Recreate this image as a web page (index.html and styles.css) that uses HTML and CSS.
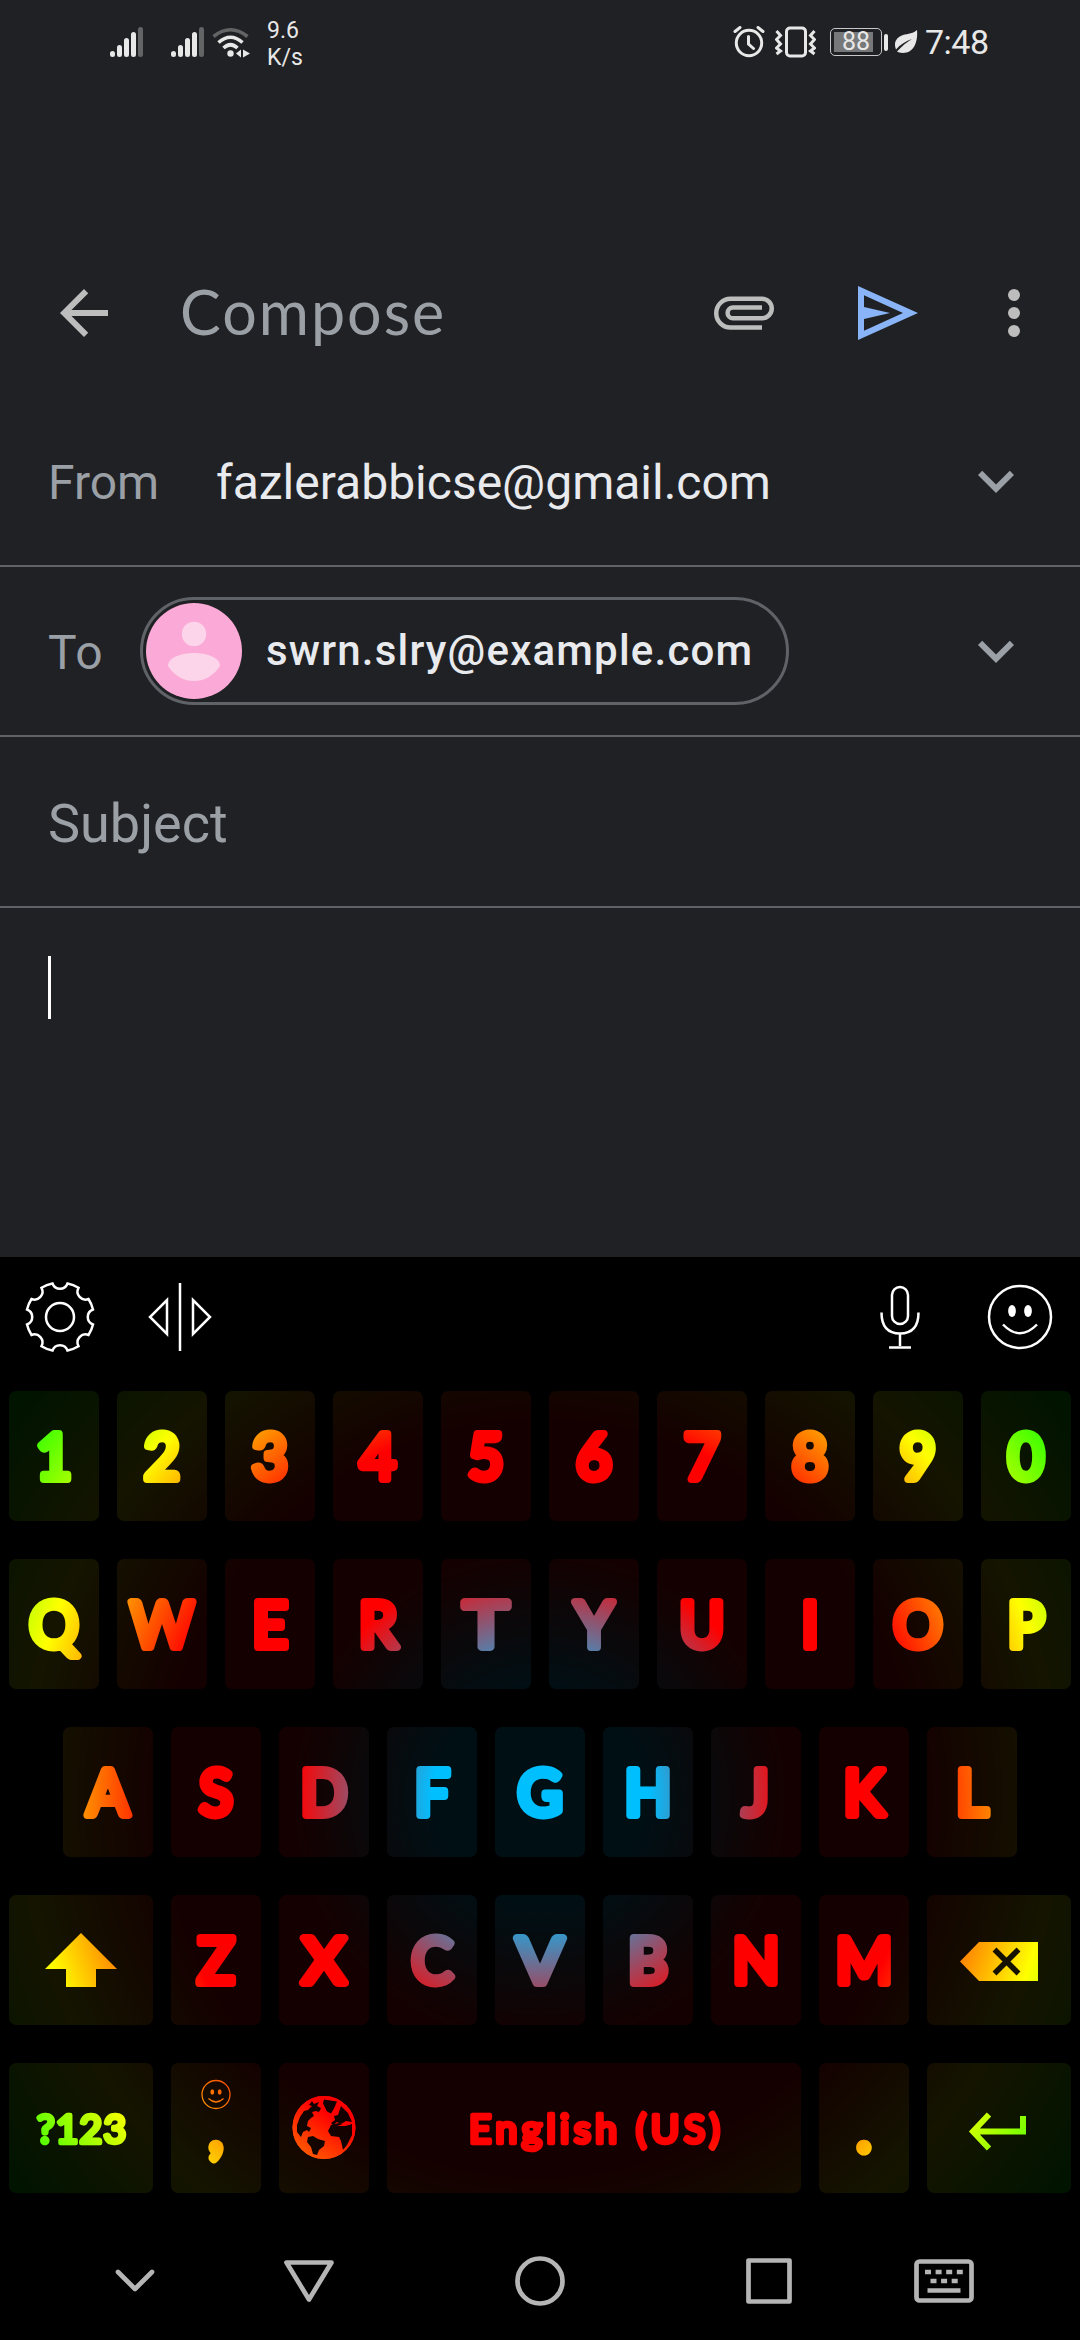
FILE: index.html
```html
<!DOCTYPE html>
<html lang="en">
<head>
<meta charset="utf-8">
<title>Compose</title>
<link rel="stylesheet" href="styles.css">
</head>
<body>
<div class="phone">
  <header class="status">
    <svg class="signal" width="33" height="30" viewBox="0 0 33 30"><path d="M2.5 26.5v1M9.5 20.5v7M16.500 13.500v14M23.500 7.500v20"/><path class="dim" d="M30.500 2.500v25"/></svg>
    <svg class="signal second" width="33" height="30" viewBox="0 0 33 30"><path d="M2.500 26.500v1M9.500 20.500v7M16.500 13.500v14M23.500 7.500v20"/><path class="dim" d="M30.500 2.500v25"/></svg>
    <svg class="wifi" width="38" height="31" viewBox="0 0 38 31" fill="none" stroke="#e8e8e8" stroke-width="3.600"><path stroke="#636466" d="M1.500 9.500Q18.500-4 35.500 9.500"/><path d="M6.500 15.500Q18.500 5 30.500 15.500M11.500 21Q18.500 14.500 25.500 21"/><circle cx="18.500" cy="26.500" r="3.200" fill="#e8e8e8" stroke="none"/><path fill="#e8e8e8" stroke="none" d="M24 26.500l5-4v8zM31 22.500l7 4-7 4z"/></svg>
    <div class="rate"><span>9.6</span><span>K/s</span></div>
    <div class="status-right">
      <svg width="32" height="32" viewBox="0 0 32 32" fill="none" stroke="#e8e8e8" stroke-width="3"><circle cx="16" cy="17" r="12.700"/><path stroke-linecap="round" d="M2 5.500L7 1.500M30 5.500L25 1.500M15.500 10.500v7.500l5 4.500"/></svg>
      <svg class="vibrate" width="41" height="32" viewBox="0 0 41 32" fill="none" stroke="#e8e8e8" stroke-width="3"><rect x="11.500" y="2" width="19" height="28" rx="3.500"/><path d="M1.500 5l4 4.500-4 4 4 4.500-4 4 4 3-4 3M39.500 5l-4 4.500 4 4-4 4.500 4 4-4 3 4 3"/></svg>
      <div class="battery"><span class="battery-level">88</span></div>
      <svg class="leaf" width="24" height="26" viewBox="0 0 24 26" fill="#e8e8e8"><path d="M23 1C24 11 21 24 9 24C6 24 4 23 3 22.500C8 17 13 13 18 10C12 12 6 15.500 2 20.500C-1 13 3 8 9 6C14 5 20 4 23 1zM2.500 22l-1 3"/></svg>
      <time class="clock">7:48</time>
    </div>
  </header>

  <main class="compose">
    <div class="appbar">
      <svg class="back" width="72" height="72" viewBox="0 0 24 24"><path fill="#bdbdbd" d="M20 11H7.830l5.590-5.590L12 4l-8 8 8 8 1.410-1.410L7.830 13H20v-2z"/></svg>
      <h1 class="title">Compose</h1>
      <svg class="attach" width="60" height="34" viewBox="714 297.500 60 34" fill="none" stroke="#bdbdbd" stroke-width="4.500"><path d="M762 329H730.500A14.250 14.350 0 0 1 730.500 300.300H762A9.750 9.750 0 0 1 762 319.800H733A5.400 5.400 0 0 1 733 309H762"/></svg>
      <svg class="send" width="60" height="54" viewBox="0 0 60 54"><path fill="#8ab4f8" fill-rule="evenodd" d="M0 0L60 27L0 54zM6 9.300V21L32 27L6 33V44.700L45 27z"/></svg>
      <svg class="more" width="12" height="48" viewBox="0 0 12 48" fill="#bdbdbd"><circle cx="6" cy="6" r="6"/><circle cx="6" cy="24" r="6"/><circle cx="6" cy="42" r="6"/></svg>
    </div>
    <div class="row">
      <span class="label from">From</span>
      <span class="address">fazlerabbicse@gmail.com</span>
      <svg class="expand" width="72" height="72" viewBox="0 0 24 24"><path fill="#9aa0a6" d="M16.590 8.590L12 13.170 7.410 8.590 6 10l6 6 6-6z"/></svg>
    </div>
    <div class="row">
      <span class="label to">To</span>
      <span class="chip">
        <svg width="96" height="96" viewBox="0 0 96 96"><circle cx="48" cy="48" r="48" fill="#fba9d6"/><circle cx="48" cy="31" r="12.200" fill="#fdd5ea"/><path fill="#fdd5ea" d="M22 63C22 54 36 50 48 50S74 54 74 63C68 72 59 78 48 78S28 72 22 63z"/></svg>
        <span class="chip-text">swrn.slry@example.com</span>
      </span>
      <svg class="expand" width="72" height="72" viewBox="0 0 24 24"><path fill="#9aa0a6" d="M16.590 8.590L12 13.170 7.410 8.590 6 10l6 6 6-6z"/></svg>
    </div>
    <div class="row subject"><span>Subject</span></div>
    <div class="editor"><div class="caret"></div></div>
  </main>

  <section class="keyboard">
    <div class="tools">
      <svg width="72" height="72" viewBox="-36 -36 72 72"><path d="M-7.500-33.500A8 8 0 0 0 7.500-33.500A34 34 0 0 1 18.500-29.200A8 8 0 0 0 28.500-18A34 34 0 0 1 33-7.500A8 8 0 0 0 33 7.500A34 34 0 0 1 28.500 18A8 8 0 0 0 18.500 29.200A34 34 0 0 1 7.500 33.500A8 8 0 0 0-7.500 33.500A34 34 0 0 1-18.500 29.200A8 8 0 0 0-28.500 18A34 34 0 0 1-33 7.500A8 8 0 0 0-33-7.500A34 34 0 0 1-28.500-18A8 8 0 0 0-18.500-29.200A34 34 0 0 1-7.500-33.500z"/><circle r="14"/></svg>
      <svg width="66" height="72" viewBox="-33 -36 66 72"><path d="M0-34V34M-13-17V17L-30 0zM13-17V17L30 0z"/></svg>
      <svg class="mic" width="42" height="66" viewBox="-21 -33 42 66"><rect x="-8" y="-30" width="16" height="37" rx="8"/><path d="M-18.500-4.500Q-18.500 16.500 0 16.500T18.500-4.500M0 16.500V29M-11 30.500H11"/></svg>
      <svg width="66" height="66" viewBox="-33 -33 66 66"><circle r="31"/><ellipse cx="-8" cy="-6" rx="3.900" ry="6" fill="#fff" stroke="none"/><ellipse cx="8" cy="-6" rx="3.900" ry="6" fill="#fff" stroke="none"/><path d="M-17 7.500Q0 25 17 7.500"/></svg>
    </div>

    <div class="keys">
      <div class="keyrow">
        <svg class="key" viewBox="0 0 90 130"><text x="45" y="87.500">1</text></svg>
        <svg class="key" viewBox="0 0 90 130"><text x="45" y="87.500">2</text></svg>
        <svg class="key" viewBox="0 0 90 130"><text x="45" y="87.500">3</text></svg>
        <svg class="key" viewBox="0 0 90 130"><text x="45" y="87.500">4</text></svg>
        <svg class="key" viewBox="0 0 90 130"><text x="45" y="87.500">5</text></svg>
        <svg class="key" viewBox="0 0 90 130"><text x="45" y="87.500">6</text></svg>
        <svg class="key" viewBox="0 0 90 130"><text x="45" y="87.500">7</text></svg>
        <svg class="key" viewBox="0 0 90 130"><text x="45" y="87.500">8</text></svg>
        <svg class="key" viewBox="0 0 90 130"><text x="45" y="87.500">9</text></svg>
        <svg class="key" viewBox="0 0 90 130"><text x="45" y="87.500">0</text></svg>
      </div>
      <div class="keyrow">
        <svg class="key" viewBox="0 0 90 130"><text x="45" y="87.500">Q</text></svg>
        <svg class="key" viewBox="0 0 90 130"><text x="45" y="87.500" textLength="63" lengthAdjust="spacingAndGlyphs">W</text></svg>
        <svg class="key" viewBox="0 0 90 130"><text x="45" y="87.500">E</text></svg>
        <svg class="key" viewBox="0 0 90 130"><text x="45" y="87.500">R</text></svg>
        <svg class="key" viewBox="0 0 90 130"><text x="45" y="87.500" textLength="44" lengthAdjust="spacingAndGlyphs">T</text></svg>
        <svg class="key" viewBox="0 0 90 130"><text x="45" y="87.500">Y</text></svg>
        <svg class="key" viewBox="0 0 90 130"><text x="45" y="87.500">U</text></svg>
        <svg class="key" viewBox="0 0 90 130"><text x="45" y="87.500">I</text></svg>
        <svg class="key" viewBox="0 0 90 130"><text x="45" y="87.500">O</text></svg>
        <svg class="key" viewBox="0 0 90 130"><text x="45" y="87.500">P</text></svg>
      </div>
      <div class="keyrow inset">
        <svg class="key" viewBox="0 0 90 130"><text x="45" y="87.500">A</text></svg>
        <svg class="key" viewBox="0 0 90 130"><text x="45" y="87.500">S</text></svg>
        <svg class="key" viewBox="0 0 90 130"><text x="45" y="87.500">D</text></svg>
        <svg class="key" viewBox="0 0 90 130"><text x="45" y="87.500">F</text></svg>
        <svg class="key" viewBox="0 0 90 130"><text x="45" y="87.500">G</text></svg>
        <svg class="key" viewBox="0 0 90 130"><text x="45" y="87.500">H</text></svg>
        <svg class="key" viewBox="0 0 90 130"><text x="45" y="87.500">J</text></svg>
        <svg class="key" viewBox="0 0 90 130"><text x="45" y="87.500">K</text></svg>
        <svg class="key" viewBox="0 0 90 130"><text x="45" y="87.500">L</text></svg>
      </div>
      <div class="keyrow">
        <svg class="key wide" viewBox="0 0 144 130"><path fill="#fff" d="M72 38L108 74H87V92H57V74H36z"/></svg>
        <svg class="key" viewBox="0 0 90 130"><text x="45" y="87.500">Z</text></svg>
        <svg class="key" viewBox="0 0 90 130"><text x="45" y="87.500" textLength="43" lengthAdjust="spacingAndGlyphs">X</text></svg>
        <svg class="key" viewBox="0 0 90 130"><text x="45" y="87.500">C</text></svg>
        <svg class="key" viewBox="0 0 90 130"><text x="45" y="87.500" textLength="46" lengthAdjust="spacingAndGlyphs">V</text></svg>
        <svg class="key" viewBox="0 0 90 130"><text x="45" y="87.500">B</text></svg>
        <svg class="key" viewBox="0 0 90 130"><text x="45" y="87.500">N</text></svg>
        <svg class="key" viewBox="0 0 90 130"><text x="45" y="87.500">M</text></svg>
        <svg class="key wide" viewBox="0 0 144 130"><path fill="#fff" d="M33 66.500L52 47H111V86H52z"/><path fill="none" stroke="#141414" stroke-width="5.500" d="M67.500 54.500L91.500 78.500M91.500 54.500L67.500 78.500"/></svg>
      </div>
      <div class="keyrow">
        <svg class="key wide" viewBox="0 0 144 130"><text class="word" x="72.500" y="79.500" textLength="89" lengthAdjust="spacing">?123</text></svg>
        <svg class="key" viewBox="0 0 90 130"><g fill="none" stroke="#fff" stroke-width="1.300"><circle cx="45" cy="31.500" r="14"/><path d="M37.500 35.500Q45 42.500 52.500 35.500"/></g><g fill="#fff"><ellipse cx="41.300" cy="29" rx="1.900" ry="2.700"/><ellipse cx="48.700" cy="29" rx="1.900" ry="2.700"/></g><text x="45" y="87.500">,</text></svg>
        <svg class="key" viewBox="0 0 90 130"><circle cx="45" cy="64.500" r="31.500" fill="#fff"/><g fill="#141414"><path d="M33 38l-3 4 3 1-4 4-4 1-4 6-3 8v7l4 5 2-5 4-2 2 2 2-4-4-2 1-5 3-3 3-2-2-4 4-1 3 1 2-4-4-2 2-4-5 2zM45 36.500l13 2-3 7-3 5-4-2-4-8zM62 43l7 7 4 9-6-1-5 3-4-2-4 3-2-2 4-3-1-4 4-1zM73 61v11l-5 10-4 5-2-9-2-4-8-1-3-5 3-6 8-2 5 3 5-1zM29 74l5-1 5 3 7 2-1 5-5 4-2 5-4-1-2-7-4-5z"/></g><circle cx="45" cy="64.500" r="30.500" fill="none" stroke="#fff" stroke-width="2"/><path fill="#fff" d="M58 63l6-2 5 1-5 1zM34 57l4 1-3 1z"/></svg>
        <svg class="key space" viewBox="0 0 414 130"><text class="word" x="207.500" y="79.500" textLength="251" lengthAdjust="spacing">English (US)</text></svg>
        <svg class="key" viewBox="0 0 90 130"><text x="45" y="87.500">.</text></svg>
        <svg class="key wide" viewBox="0 0 144 130"><path fill="none" stroke="#fff" stroke-width="6" d="M62 51.500L46 68.500L62 85.500M46 68.500H96V53"/></svg>
      </div>
    </div>

    <nav class="nav">
      <svg width="44" height="54" viewBox="-22 -27 44 54"><path stroke-linecap="round" d="M-17-9L0 8L17-9"/></svg>
      <svg width="60" height="54" viewBox="-30 -27 60 54"><path d="M-22.500-18.500H22.500L0 18.500z"/></svg>
      <svg width="54" height="54" viewBox="-27 -27 54 54"><circle r="22.500"/></svg>
      <svg width="54" height="54" viewBox="-27 -27 54 54"><rect x="-20.500" y="-20.500" width="41" height="41"/></svg>
      <svg width="64" height="54" viewBox="-32 -27 64 54"><rect x="-27.500" y="-19.500" width="55" height="39" rx="3"/><path stroke-dasharray="6 4.600" d="M-19-9H19"/><path stroke-dasharray="6 4.600" d="M-13.500 0H14.500"/><path d="M-16.500 9.500H16.500"/></svg>
    </nav>
  </section>
</div>
</body>
</html>
```
FILE: styles.css
```css
* { box-sizing: border-box; }
body {
  margin: 0;
  background: #202124;
  font-family: Roboto, "Liberation Sans", sans-serif;
}
svg { display: block; flex: none; }
.phone {
  display: flex;
  flex-direction: column;
  width: 1080px;
  height: 2340px;
  overflow: hidden;
}

/* status bar */
.status {
  display: flex;
  align-items: center;
  height: 84px;
  padding: 0 92px 0 110px;
  color: #e8e8e8;
}
.signal { fill: none; stroke: #e8e8e8; stroke-width: 5; stroke-linecap: round; }
.signal .dim { stroke: #636466; }
.second { margin-left: 28px; }
.wifi { margin-left: 8px; }
.rate {
  display: flex;
  flex-direction: column;
  margin: 3px 0 0 17px;
  font-size: 23px;
  line-height: 27px;
}
.status-right {
  display: flex;
  align-items: center;
  margin-left: auto;
}
.vibrate { margin-left: 10px; }
.battery {
  position: relative;
  width: 52px;
  height: 28px;
  margin: 0 12px 0 14px;
  padding: 3px;
  border: 1.500px solid #c8c8c8;
  border-radius: 5px;
}
.battery::after {
  content: "";
  position: absolute;
  left: 53px;
  top: 5px;
  width: 4px;
  height: 17px;
  border-radius: 2px;
  background: #e8e8e8;
}
.battery-level {
  display: block;
  width: 39px;
  height: 20px;
  padding-left: 8px;
  background: #77787a;
  font-size: 25px;
  line-height: 20px;
}
.clock {
  width: 63px;
  margin-left: 7px;
  font-size: 34px;
  line-height: 40px;
  letter-spacing: -0.500px;
  white-space: nowrap;
}

/* compose form */
.compose {
  display: flex;
  flex-direction: column;
  height: 1173px;
}
.appbar {
  display: flex;
  align-items: center;
  height: 168px;
  margin-top: 145px;
  padding: 0 60px 0 48px;
}
.title {
  margin: -2px auto 0 60px;
  font: 400 61px/72px Lato, sans-serif;
  letter-spacing: 2px;
  color: #9aa0a6;
}
.send { margin-left: 84px; }
.more { margin-left: 90px; }
.row {
  display: flex;
  align-items: center;
  height: 170px;
  padding: 0 48px;
  border-bottom: 2px solid #5f6368;
  font-size: 48px;
  line-height: 56px;
  color: #9aa0a6;
}
.label { flex: none; }
.from { width: 168px; padding-top: 3px; }
.to { width: 92px; padding-top: 3px; letter-spacing: 1px; }
.address { padding-top: 3px; color: #e8eaed; }
.expand { margin-left: auto; }
.chip {
  display: flex;
  align-items: center;
  width: 649px;
  height: 108px;
  padding: 0 3px;
  border: 3px solid #5f6368;
  border-radius: 54px;
}
.chip-text {
  margin-left: 24px;
  font-size: 42px;
  font-weight: 500;
  letter-spacing: 1.200px;
  color: #e8eaed;
  white-space: nowrap;
}
.subject {
  height: 171px;
  padding-top: 5px;
  font-size: 54px;
}
.editor { padding: 48px; }
.caret {
  width: 3px;
  height: 63px;
  background: #fff;
}

/* keyboard */
.keyboard {
  display: flex;
  flex-direction: column;
  height: 1083px;
  background: #000;
}
.tools {
  display: flex;
  align-items: center;
  height: 120px;
  padding: 0 27px 0 24px;
  fill: none;
  stroke: #fff;
  stroke-width: 2.500;
}
.tools svg + svg { margin-left: 51px; }
.tools .mic { margin-left: auto !important; }
.tools .mic + svg { margin-left: 66px; }
.keys {
  position: relative;
  display: flex;
  flex-direction: column;
  gap: 38px;
  padding: 14px 9px 0;
  background: #000;
  isolation: isolate;
}
/* tints the whole key area with one glow centred behind the G key */
.keys::after {
  content: "";
  position: absolute;
  inset: 0;
  background: radial-gradient(circle at 540px 421px, #00bfff 108px, #f00 245px, #f00 380px, #ff0 517px, #0f0 653px);
  mix-blend-mode: multiply;
  pointer-events: none;
}
.keyrow { display: flex; gap: 18px; }
.inset { padding-left: 54px; }
.key {
  width: 90px;
  height: 130px;
  border-radius: 7px;
  background: #141414;
}
.wide { width: 144px; }
.space { width: 414px; }
.key text {
  font-family: Lato, sans-serif;
  font-size: 61px;
  font-weight: 400;
  text-anchor: middle;
  fill: #fff;
  stroke: #fff;
  stroke-width: 8;
  stroke-linejoin: round;
}
.key .word {
  font-size: 39px;
  stroke-width: 4.600;
}

/* navigation bar */
.nav {
  display: flex;
  align-items: center;
  height: 54px;
  margin-top: 61px;
  padding-left: 113px;
  fill: none;
  stroke: #b5b5b5;
  stroke-width: 4.700;
  stroke-linejoin: round;
}
.nav svg:nth-child(2) { margin-left: 122px; }
.nav svg:nth-child(3) { margin-left: 174px; }
.nav svg:nth-child(4) { margin-left: 175px; }
.nav svg:nth-child(5) { margin-left: 116px; }
```
